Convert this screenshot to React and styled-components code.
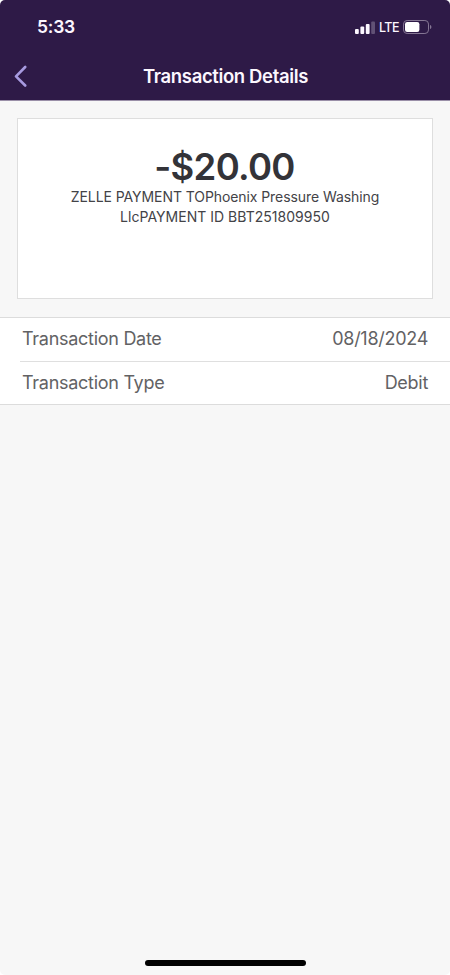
import React from "react";
import styled, { createGlobalStyle } from "styled-components";

const GlobalStyle = createGlobalStyle`
  * {
    box-sizing: border-box;
  }
  body {
    margin: 0;
    background: #ffffff;
    font-family: Inter, "Liberation Sans", sans-serif;
  }
`;

const Screen = styled.div`
  width: 450px;
  height: 975px;
  display: flex;
  flex-direction: column;
  background: #f7f7f7;
  border-radius: 5px;
  overflow: hidden;
`;

const Header = styled.header`
  height: 101px;
  flex: none;
  background: #2e1a47;
  border-bottom: 1px solid #9a8fa8;
  color: #fcf7ff;
`;

const StatusBar = styled.div`
  height: 54px;
  padding: 0 18px 0 37px;
  display: flex;
  align-items: center;
  justify-content: space-between;
`;

const Clock = styled.span`
  font-size: 17.5px;
  font-weight: 600;
  line-height: 22px;
  letter-spacing: -0.2px;
`;

const StatusIcons = styled.div`
  display: flex;
  align-items: center;
  svg {
    display: block;
  }
`;

const Network = styled.span`
  margin: 1px 4px 0 4px;
  font-size: 12.5px;
  font-weight: 500;
  line-height: 16px;
  letter-spacing: -0.5px;
`;

const NavBar = styled.div`
  height: 44px;
  padding: 0 15px 0 14px;
  display: grid;
  grid-template-columns: 60px 1fr 60px;
  align-items: center;
  h1 {
    margin: 0 0 0 2px;
    font-size: 18.5px;
    font-weight: 600;
    line-height: 24px;
    letter-spacing: -0.36px;
    text-align: center;
    white-space: nowrap;
  }
`;

const BackButton = styled.button`
  padding: 0;
  border: 0;
  background: none;
  svg {
    display: block;
  }
`;

const Card = styled.section`
  height: 181px;
  flex: none;
  margin: 17px 17px 18px;
  padding-top: 28px;
  background: #ffffff;
  border: 1px solid #dedede;
  text-align: center;
`;

const Amount = styled.div`
  padding-right: 1px;
  font-size: 36.5px;
  font-weight: 600;
  line-height: 40px;
  letter-spacing: -0.7px;
  color: #333338;
`;

const Description = styled.p`
  margin: 0;
  font-size: 14px;
  line-height: 19.5px;
  color: #434347;
`;

const DescriptionLine = styled.span`
  display: block;
  letter-spacing: ${(props) => (props.$tight ? "-0.08px" : "0.02px")};
`;

const Details = styled.dl`
  margin: 0;
  background: #ffffff;
  border-top: 1px solid #dcdcdc;
  border-bottom: 1px solid #dcdcdc;
`;

const Row = styled.div`
  height: ${(props) => (props.$divided ? "44px" : "42px")};
  margin-left: 20px;
  padding: 0 22px ${(props) => (props.$divided ? "2px" : "1px")} 2px;
  display: flex;
  align-items: center;
  justify-content: space-between;
  border-bottom: ${(props) => (props.$divided ? "1px solid #dfdfdf" : "0")};
  font-size: 18px;
  color: #626264;
  dt,
  dd {
    margin: 0;
    letter-spacing: -0.28px;
  }
`;

const HomeIndicator = styled.div`
  width: 161px;
  height: 6px;
  flex: none;
  margin: auto auto 9px;
  border-radius: 3px;
  background: #000000;
`;

const details = [
  { label: "Transaction Date", value: "08/18/2024" },
  { label: "Transaction Type", value: "Debit" },
];

function SignalIcon() {
  return (
    <svg width="20" height="13" viewBox="0 0 20 13" fill="#fcf7ff">
      <rect x="0" y="8" width="3.8" height="5" rx="1" />
      <rect x="5.4" y="5.6" width="3.8" height="7.4" rx="1" />
      <rect x="10.8" y="3" width="3.8" height="10" rx="1" />
      <rect x="16.2" y="0.4" width="3.8" height="12.6" rx="1" opacity="0.25" />
    </svg>
  );
}

function BatteryIcon() {
  return (
    <svg width="29" height="14" viewBox="0 0 29 14">
      <rect
        x="0.5"
        y="0.5"
        width="25"
        height="13"
        rx="3.6"
        fill="none"
        stroke="#857694"
      />
      <rect x="2" y="2" width="14.4" height="10" rx="2.2" fill="#ffffff" />
      <path d="M27 5v4c1-.4 1.4-1.1 1.4-2S28 5.400 27 5z" fill="#857694" />
    </svg>
  );
}

function App() {
  return (
    <>
      <GlobalStyle />
      <Screen>
        <Header>
          <StatusBar>
            <Clock>5:33</Clock>
            <StatusIcons>
              <SignalIcon />
              <Network>LTE</Network>
              <BatteryIcon />
            </StatusIcons>
          </StatusBar>
          <NavBar>
            <BackButton aria-label="Back">
              <svg width="13" height="22" viewBox="0 0 13 22" fill="none">
                <path
                  d="M11.200 2 2 11.300 11.200 20.500"
                  stroke="#a79ae0"
                  strokeWidth="2.6"
                  strokeLinecap="round"
                  strokeLinejoin="round"
                />
              </svg>
            </BackButton>
            <h1>Transaction Details</h1>
          </NavBar>
        </Header>
        <Card>
          <Amount>-$20.00</Amount>
          <Description>
            <DescriptionLine $tight>
              ZELLE PAYMENT TOPhoenix Pressure Washing
            </DescriptionLine>
            <DescriptionLine>LlcPAYMENT ID BBT251809950</DescriptionLine>
          </Description>
        </Card>
        <Details>
          {details.map((item, index) => (
            <Row key={item.label} $divided={index < details.length - 1}>
              <dt>{item.label}</dt>
              <dd>{item.value}</dd>
            </Row>
          ))}
        </Details>
        <HomeIndicator />
      </Screen>
    </>
  );
}

export default App;
